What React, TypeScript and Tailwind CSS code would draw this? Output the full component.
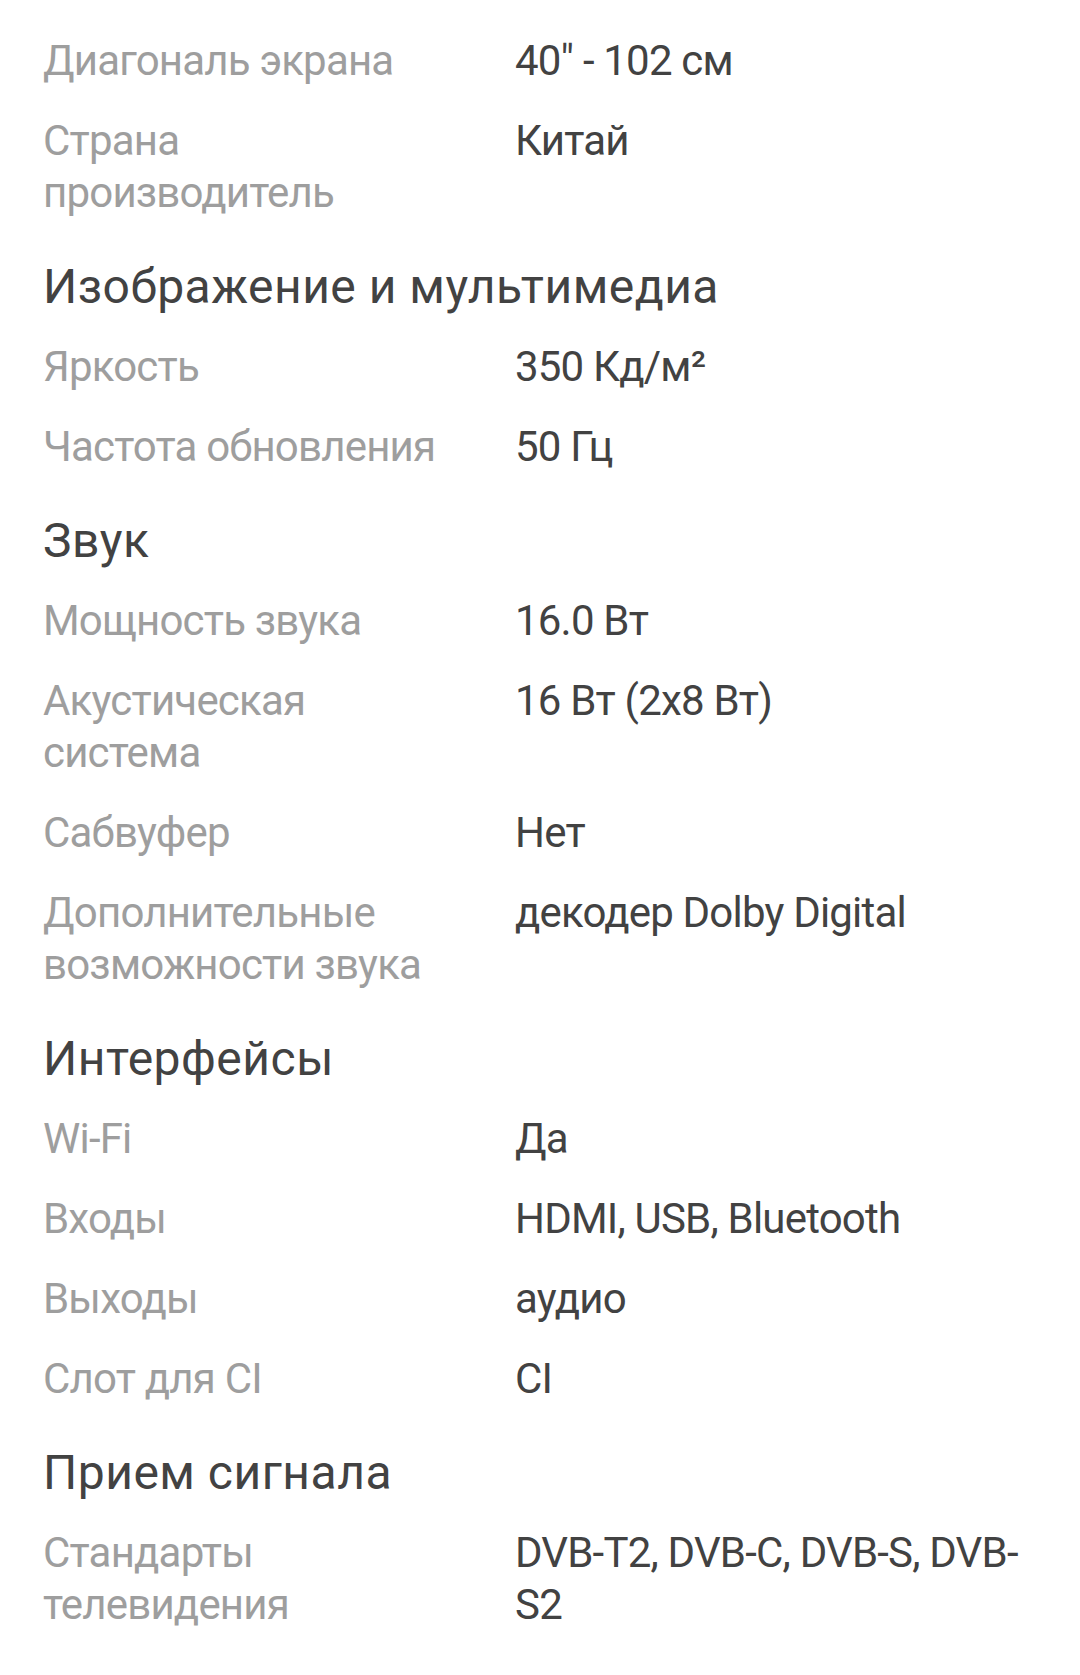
import React from "react";

type Row = { label: string; value: string };
type Section = { title?: string; rows: Row[] };

const sections: Section[] = [
  {
    rows: [
      { label: "Диагональ экрана", value: "40\" - 102 см" },
      { label: "Страна производитель", value: "Китай" },
    ],
  },
  {
    title: "Изображение и мультимедиа",
    rows: [
      { label: "Яркость", value: "350 Кд/м²" },
      { label: "Частота обновления", value: "50 Гц" },
    ],
  },
  {
    title: "Звук",
    rows: [
      { label: "Мощность звука", value: "16.0 Вт" },
      { label: "Акустическая система", value: "16 Вт (2x8 Вт)" },
      { label: "Сабвуфер", value: "Нет" },
      { label: "Дополнительные возможности звука", value: "декодер Dolby Digital" },
    ],
  },
  {
    title: "Интерфейсы",
    rows: [
      { label: "Wi-Fi", value: "Да" },
      { label: "Входы", value: "HDMI, USB, Bluetooth" },
      { label: "Выходы", value: "аудио" },
      { label: "Слот для CI", value: "CI" },
    ],
  },
  {
    title: "Прием сигнала",
    rows: [{ label: "Стандарты телевидения", value: "DVB-T2, DVB-C, DVB-S, DVB-S2" }],
  },
];

export default function App() {
  return (
    <div
      className="w-[1080px] h-[1675px] overflow-hidden bg-white pt-[21px] pl-[43px] pr-[40px]"
      style={{ fontFamily: "Roboto, 'Noto Sans', sans-serif" }}
    >
      {sections.map((s, i) => (
        <div key={i}>
          {s.title && (
            <h2 className="pt-[26px] pb-[12px] text-[48px] leading-[56px] tracking-[0.5px] font-normal text-[#424242]">
              {s.title}
            </h2>
          )}
          {s.rows.map((r, j) => (
            <div key={j} className="flex py-[14px] text-[42px] leading-[52px] tracking-[-0.8px]">
              <div className="w-[472px] shrink-0 pr-[66px] text-[#9e9e9e]">{r.label}</div>
              <div className="flex-1 text-[#424242]">{r.value}</div>
            </div>
          ))}
        </div>
      ))}
    </div>
  );
}
